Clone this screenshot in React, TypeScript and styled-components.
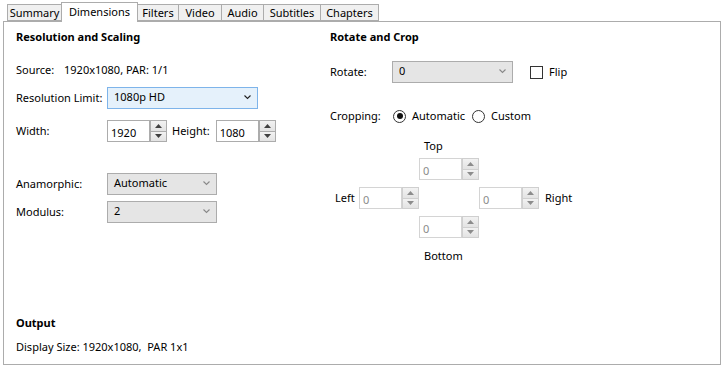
import React from 'react'
import styled, { createGlobalStyle } from 'styled-components'

const Global = createGlobalStyle`
  body {
    margin: 0;
    background: #fff;
    font-family: "Noto Sans", "Open Sans", sans-serif;
    font-size: 11px;
    color: #000;
  }
  * { box-sizing: border-box; }
`

const Window = styled.div`
  width: 726px;
  height: 372px;
  padding-left: 3px;
`

const TabStrip = styled.div`
  display: flex;
  align-items: flex-end;
  height: 21px;
  padding-left: 4px;
  position: relative;
  z-index: 1;
`

const Tab = styled.div<{ $w: number; $active?: boolean }>`
  width: ${(p) => p.$w}px;
  height: ${(p) => (p.$active ? 20 : 17)}px;
  margin-left: -1px;
  margin-bottom: ${(p) => (p.$active ? -1 : 0)}px;
  border: 1px solid #acacac;
  border-bottom: ${(p) => (p.$active ? 'none' : '1px solid #acacac')};
  background: ${(p) => (p.$active ? '#fff' : '#f0f0f0')};
  position: relative;
  z-index: ${(p) => (p.$active ? 2 : 1)};
  display: flex;
  align-items: center;
  justify-content: center;
  padding-bottom: ${(p) => (p.$active ? 2 : 0)}px;
  line-height: 14px;
  &:first-child {
    margin-left: 0;
  }
`

const Panel = styled.div`
  width: 718px;
  height: 344px;
  border: 1px solid #acacac;
  display: flex;
  flex-direction: column;
  padding: 7px 0 9px 12px;
`

const Columns = styled.div`
  display: grid;
  grid-template-columns: 314px 1fr;
`

const Column = styled.div`
  display: flex;
  flex-direction: column;
`

const Heading = styled.div`
  font-weight: 700;
  line-height: 16px;
  height: 16px;
`

const Row = styled.div<{ $top: number }>`
  display: flex;
  align-items: center;
  margin-top: ${(p) => p.$top}px;
  line-height: 16px;
`

const Label = styled.span<{ $w?: number }>`
  width: ${(p) => (p.$w ? `${p.$w}px` : 'auto')};
  flex: none;
  white-space: nowrap;
`

const Value = styled.span<{ $gap?: number }>`
  margin-left: ${(p) => p.$gap ?? 0}px;
  white-space: nowrap;
`

const ComboBox = styled.div<{ $w: number; $hover?: boolean }>`
  width: ${(p) => p.$w}px;
  height: 22px;
  border: 1px solid ${(p) => (p.$hover ? '#7eb4ea' : '#acacac')};
  background: ${(p) => (p.$hover ? '#e5f1fb' : '#e5e5e5')};
  display: flex;
  align-items: center;
  justify-content: space-between;
  padding: 0 6px 2px 6px;
  flex: none;
`

const Chevron = ({ dark }: { dark?: boolean }) => (
  <svg width="7" height="5" viewBox="0 0 7 5">
    <polyline
      points="0.5,0.5 3.5,3.5 6.5,0.5"
      fill="none"
      stroke={dark ? '#222' : '#888'}
      strokeWidth="1.1"
    />
  </svg>
)

const SpinWrap = styled.div`
  width: 60px;
  height: 22px;
  display: flex;
  flex: none;
`

const SpinInput = styled.div<{ $disabled?: boolean }>`
  flex: 1;
  border: 1px solid ${(p) => (p.$disabled ? '#d4d4d4' : '#acacac')};
  background: #fff;
  color: ${(p) => (p.$disabled ? '#8a8a8a' : '#000')};
  padding: 4px 0 0 3px;
  line-height: 16px;
`

const SpinButtons = styled.div`
  width: 17px;
  display: flex;
  flex-direction: column;
`

const SpinButton = styled.div<{ $disabled?: boolean }>`
  flex: 1;
  border: 1px solid ${(p) => (p.$disabled ? '#cfcfcf' : '#acacac')};
  background: linear-gradient(#f2f2f2, #e3e3e3);
  display: flex;
  align-items: center;
  justify-content: center;
  & + & {
    border-top: none;
  }
`

const Arrow = ({ up, disabled }: { up?: boolean; disabled?: boolean }) => (
  <svg width="7" height="4" viewBox="0 0 7 4">
    <polygon
      points={up ? '0,4 3.5,0 7,4' : '0,0 7,0 3.5,4'}
      fill={disabled ? '#8c8c8c' : '#404040'}
    />
  </svg>
)

const Spinner = ({ value, disabled }: { value: string; disabled?: boolean }) => (
  <SpinWrap>
    <SpinInput $disabled={disabled}>{value}</SpinInput>
    <SpinButtons>
      <SpinButton $disabled={disabled}>
        <Arrow up disabled={disabled} />
      </SpinButton>
      <SpinButton $disabled={disabled}>
        <Arrow disabled={disabled} />
      </SpinButton>
    </SpinButtons>
  </SpinWrap>
)

const CheckBox = styled.span`
  width: 13px;
  height: 13px;
  border: 1px solid #333;
  background: #fff;
  flex: none;
`

const Radio = styled.span<{ $checked?: boolean }>`
  width: 13px;
  height: 13px;
  border: 1px solid #333;
  border-radius: 50%;
  background: #fff;
  flex: none;
  display: flex;
  align-items: center;
  justify-content: center;
  &::after {
    content: '';
    width: 6px;
    height: 6px;
    border-radius: 50%;
    background: ${(p) => (p.$checked ? '#111' : 'transparent')};
  }
`

const CropGrid = styled.div`
  display: grid;
  grid-template-columns: 24px 60px 60px 60px auto;
  grid-template-rows: 20px 29px 29px 32px 16px;
  align-items: start;
  margin: 14px 0 0 5px;
  line-height: 16px;
`

const CropLabel = styled.div<{ $col: number; $row: number; $pad?: number }>`
  grid-column: ${(p) => p.$col};
  grid-row: ${(p) => p.$row};
  padding-left: ${(p) => p.$pad ?? 0}px;
  height: ${(p) => (p.$row === 3 ? 22 : 16)}px;
  display: flex;
  align-items: center;
  white-space: nowrap;
`

const Cell = styled.div<{ $col: number; $row: number }>`
  grid-column: ${(p) => p.$col};
  grid-row: ${(p) => p.$row};
`

const Output = styled.div`
  margin-top: auto;
  display: flex;
  flex-direction: column;
`

const tabs = [
  { name: 'Summary', w: 55 },
  { name: 'Dimensions', w: 77, active: true },
  { name: 'Filters', w: 42 },
  { name: 'Video', w: 44 },
  { name: 'Audio', w: 43 },
  { name: 'Subtitles', w: 58 },
  { name: 'Chapters', w: 59 },
]

export default function App() {
  return (
    <Window>
      <Global />
      <TabStrip>
        {tabs.map((t) => (
          <Tab key={t.name} $w={t.w} $active={t.active}>
            {t.name}
          </Tab>
        ))}
      </TabStrip>
      <Panel>
        <Columns>
          <Column>
            <Heading>Resolution and Scaling</Heading>
            <Row $top={17}>
              <Label $w={48}>Source:</Label>
              <Value>1920x1080, PAR: 1/1</Value>
            </Row>
            <Row $top={9}>
              <Label $w={91}>Resolution Limit:</Label>
              <ComboBox $w={151} $hover>
                <span>1080p HD</span>
                <Chevron dark />
              </ComboBox>
            </Row>
            <Row $top={11}>
              <Label $w={91}>Width:</Label>
              <Spinner value="1920" />
              <Label style={{ marginLeft: 5 }}>Height:</Label>
              <span style={{ width: 6 }} />
              <Spinner value="1080" />
            </Row>
            <Row $top={31}>
              <Label $w={91}>Anamorphic:</Label>
              <ComboBox $w={110}>
                <span>Automatic</span>
                <Chevron />
              </ComboBox>
            </Row>
            <Row $top={6}>
              <Label $w={91}>Modulus:</Label>
              <ComboBox $w={110}>
                <span>2</span>
                <Chevron />
              </ComboBox>
            </Row>
          </Column>
          <Column>
            <Heading>Rotate and Crop</Heading>
            <Row $top={16}>
              <Label $w={62}>Rotate:</Label>
              <ComboBox $w={121}>
                <span>0</span>
                <Chevron />
              </ComboBox>
              <CheckBox style={{ marginLeft: 17 }} />
              <Value $gap={6}>Flip</Value>
            </Row>
            <Row $top={25}>
              <Label $w={63}>Cropping:</Label>
              <Radio $checked />
              <Value $gap={6}>Automatic</Value>
              <Radio $checked={false} style={{ marginLeft: 7 }} />
              <Value $gap={6}>Custom</Value>
            </Row>
            <CropGrid>
              <CropLabel $col={3} $row={1} $pad={5}>
                Top
              </CropLabel>
              <Cell $col={3} $row={2}>
                <Spinner value="0" disabled />
              </Cell>
              <CropLabel $col={1} $row={3}>
                Left
              </CropLabel>
              <Cell $col={2} $row={3}>
                <Spinner value="0" disabled />
              </Cell>
              <Cell $col={4} $row={3}>
                <Spinner value="0" disabled />
              </Cell>
              <CropLabel $col={5} $row={3} $pad={6}>
                Right
              </CropLabel>
              <Cell $col={3} $row={4}>
                <Spinner value="0" disabled />
              </Cell>
              <CropLabel $col={3} $row={5} $pad={5}>
                Bottom
              </CropLabel>
            </CropGrid>
          </Column>
        </Columns>
        <Output>
          <Heading>Output</Heading>
          <Row $top={8}>
            <Value>Display Size: 1920x1080,&nbsp; PAR 1x1</Value>
          </Row>
        </Output>
      </Panel>
    </Window>
  )
}
